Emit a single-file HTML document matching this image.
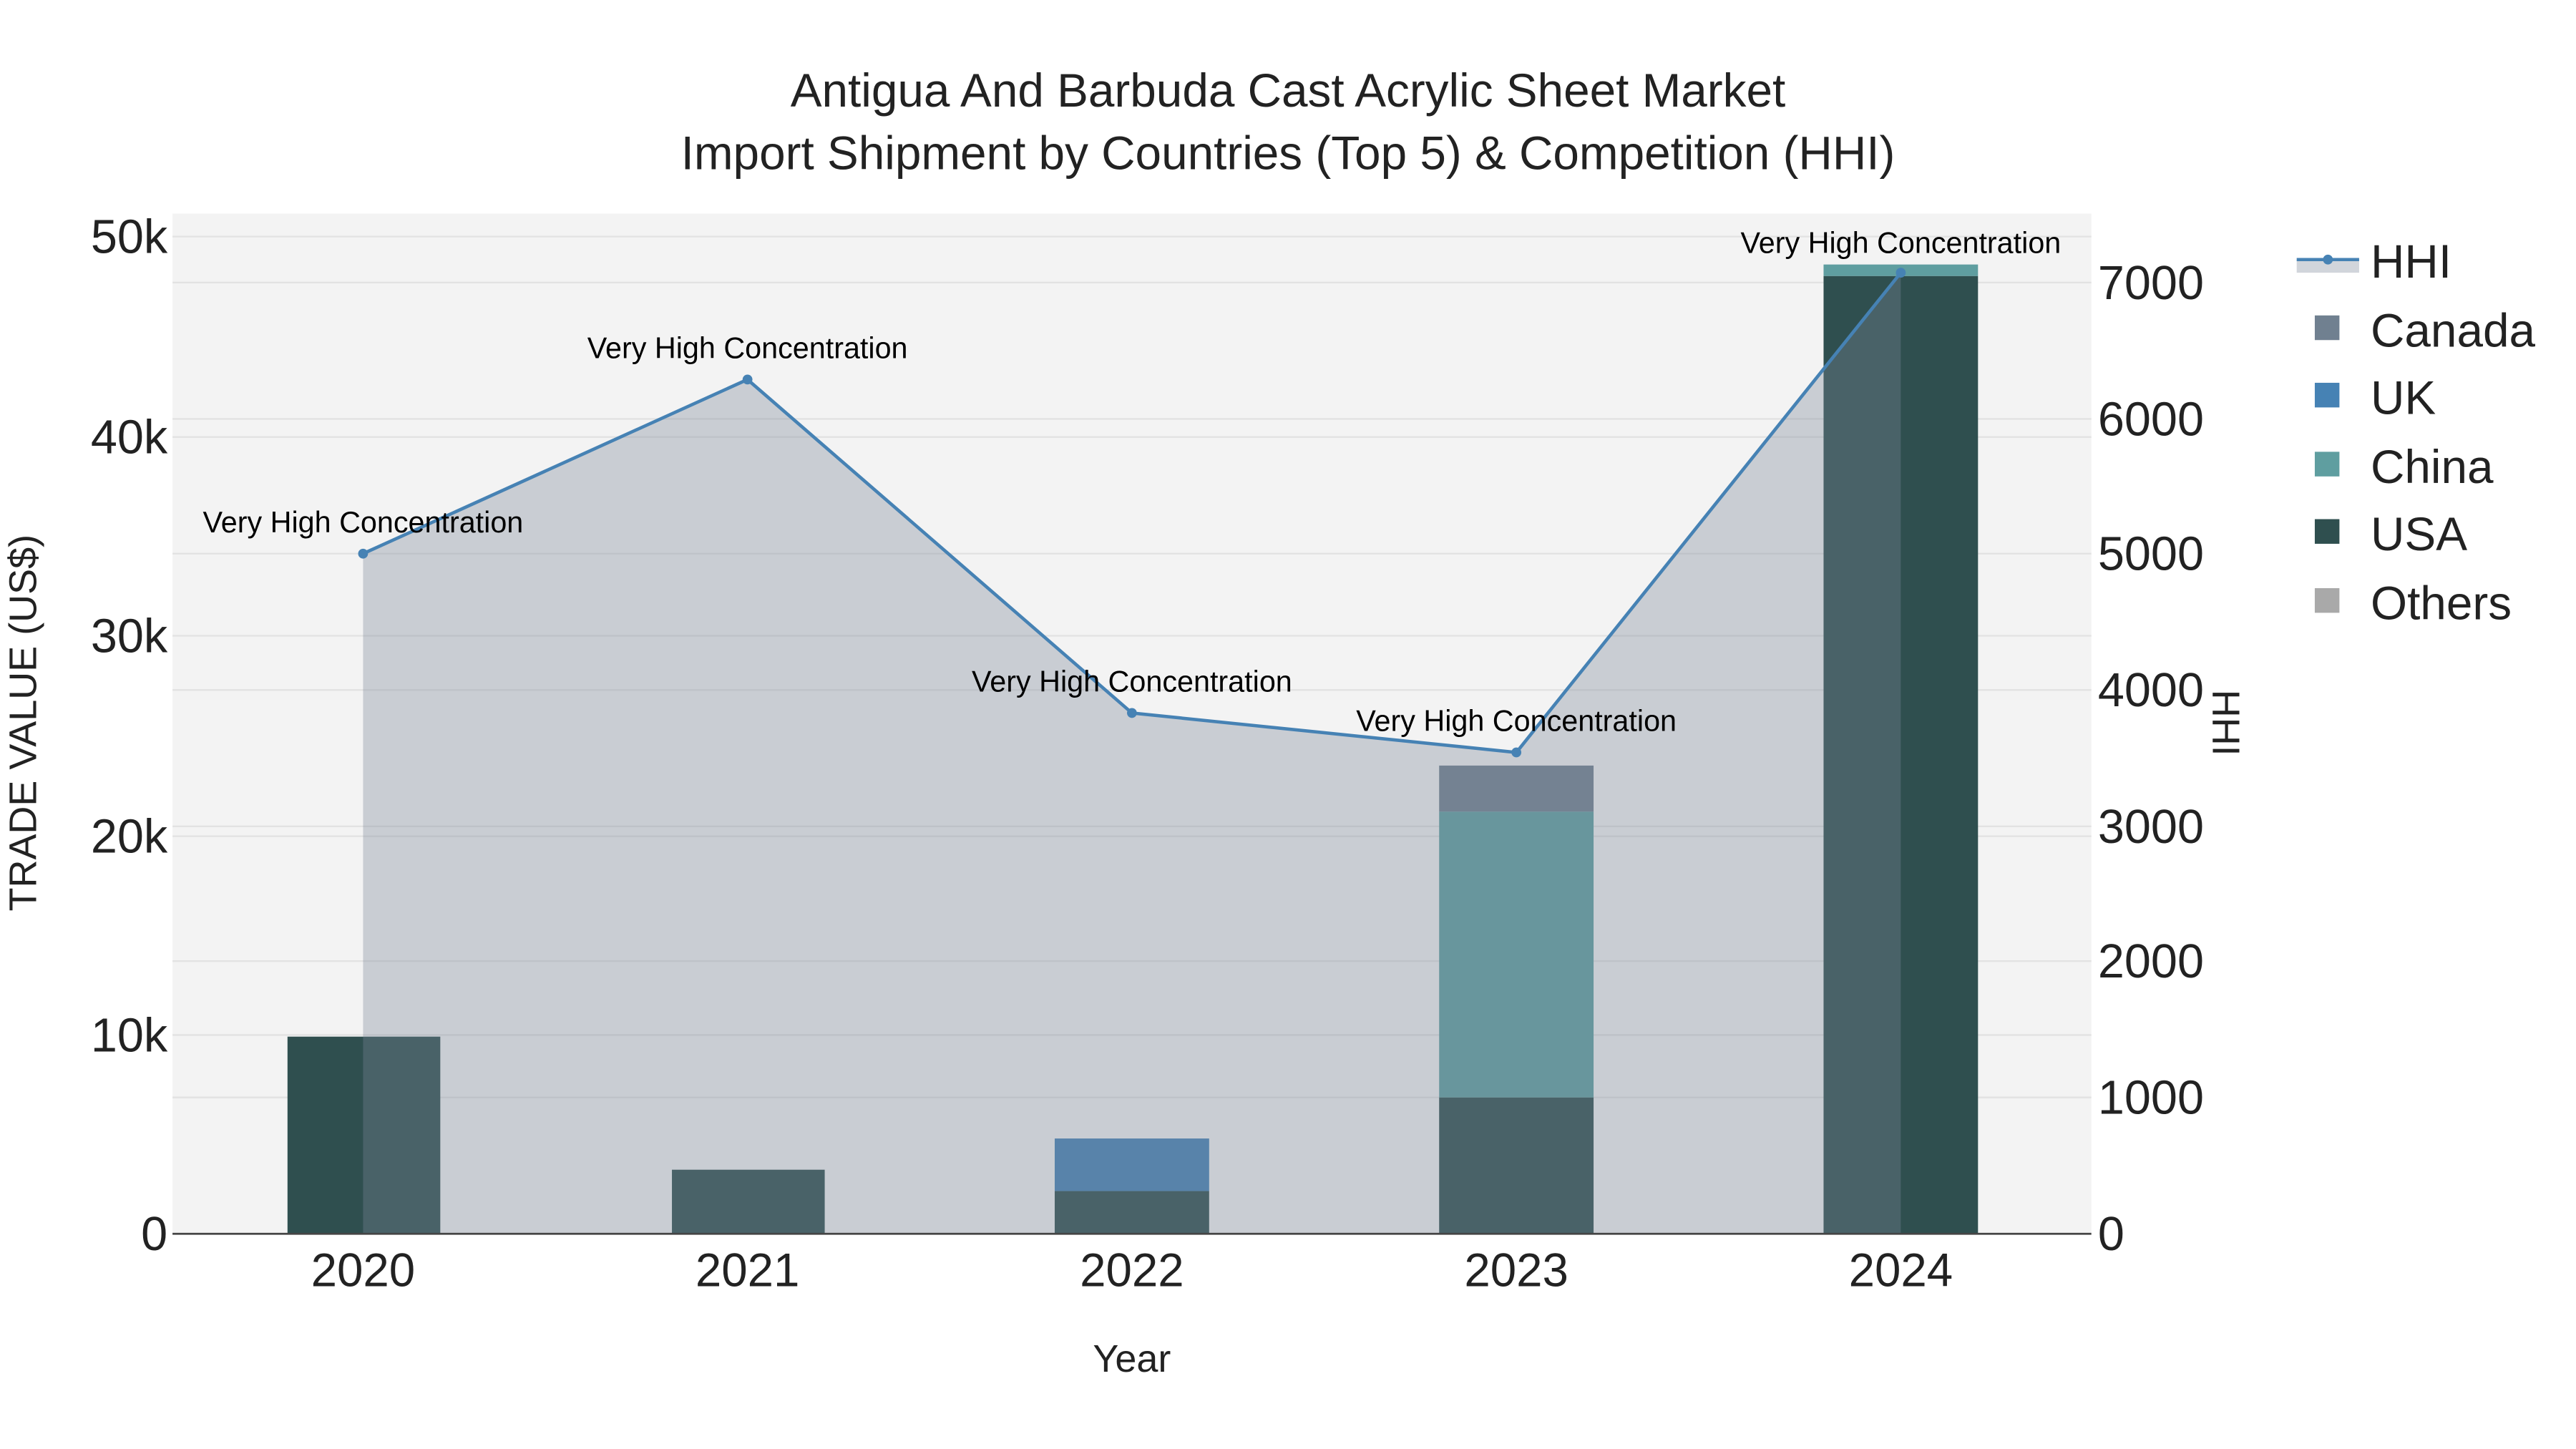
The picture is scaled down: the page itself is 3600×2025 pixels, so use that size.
<!DOCTYPE html>
<html><head><meta charset="utf-8"><style>html,body{margin:0;padding:0;background:#fff}svg{display:block}</style></head>
<body>
<svg width="3600" height="2025" viewBox="0 0 1568 882" xmlns="http://www.w3.org/2000/svg" font-family="Liberation Sans, sans-serif">
<rect x="0" y="0" width="1568" height="882" fill="#fff"/>
<rect x="105" y="130" width="1168" height="621" fill="#f3f3f3"/>
<g stroke="#e2e2e2" stroke-width="1">
<line x1="105" x2="1273" y1="144" y2="144"/><line x1="105" x2="1273" y1="266" y2="266"/><line x1="105" x2="1273" y1="387" y2="387"/><line x1="105" x2="1273" y1="509" y2="509"/><line x1="105" x2="1273" y1="630" y2="630"/>
<line x1="105" x2="1273" y1="172" y2="172"/><line x1="105" x2="1273" y1="255" y2="255"/><line x1="105" x2="1273" y1="337" y2="337"/><line x1="105" x2="1273" y1="420" y2="420"/><line x1="105" x2="1273" y1="503" y2="503"/><line x1="105" x2="1273" y1="585" y2="585"/><line x1="105" x2="1273" y1="668" y2="668"/>
</g>
<rect x="175" y="631" width="93" height="120" fill="#2f4f4f"/>
<rect x="409" y="712" width="93" height="39" fill="#2f4f4f"/>
<rect x="642" y="725" width="94" height="26" fill="#2f4f4f"/>
<rect x="642" y="693" width="94" height="32" fill="#4682b4"/>
<rect x="876" y="668" width="94" height="83" fill="#2f4f4f"/>
<rect x="876" y="494" width="94" height="174" fill="#5f9ea0"/>
<rect x="876" y="466" width="94" height="28" fill="#708090"/>
<rect x="1110" y="168" width="94" height="583" fill="#2f4f4f"/>
<rect x="1110" y="161" width="94" height="7" fill="#5f9ea0"/>
<polygon points="221,751 221,337 455,231 689,434 923,458 1157,166 1157,751" fill="rgb(123,134,153)" fill-opacity="0.35"/>
<polyline points="221,337 455,231 689,434 923,458 1157,166" fill="none" stroke="#4682b4" stroke-width="2"/>
<g fill="#4682b4"><circle cx="221" cy="337" r="3"/><circle cx="455" cy="231" r="3"/><circle cx="689" cy="434" r="3"/><circle cx="923" cy="458" r="3"/><circle cx="1157" cy="166" r="3"/></g>
<line x1="105" x2="1273" y1="751" y2="751" stroke="#444" stroke-width="1.2"/>
<g font-size="18" text-anchor="middle" fill="#000">
<text x="221" y="324">Very High Concentration</text>
<text x="455" y="218">Very High Concentration</text>
<text x="689" y="421">Very High Concentration</text>
<text x="923" y="445">Very High Concentration</text>
<text x="1157" y="154">Very High Concentration</text>
</g>
<g font-size="28.6" text-anchor="middle" fill="#222">
<text x="784" y="65">Antigua And Barbuda Cast Acrylic Sheet Market</text>
<text x="784" y="103">Import Shipment by Countries (Top 5) &amp; Competition (HHI)</text>
</g>
<g font-size="29" text-anchor="end" fill="#222">
<text x="102" y="154">50k</text><text x="102" y="276">40k</text><text x="102" y="397">30k</text><text x="102" y="519">20k</text><text x="102" y="640">10k</text><text x="102" y="761">0</text>
</g>
<g font-size="29" text-anchor="start" fill="#222">
<text x="1277" y="182">7000</text><text x="1277" y="265">6000</text><text x="1277" y="347">5000</text><text x="1277" y="430">4000</text><text x="1277" y="513">3000</text><text x="1277" y="595">2000</text><text x="1277" y="678">1000</text><text x="1277" y="761">0</text>
</g>
<g font-size="28.5" text-anchor="middle" fill="#222">
<text x="221" y="783">2020</text><text x="455" y="783">2021</text><text x="689" y="783">2022</text><text x="923" y="783">2023</text><text x="1157" y="783">2024</text>
</g>
<text x="689" y="835" font-size="23.5" text-anchor="middle" fill="#222">Year</text>
<text transform="translate(22,440) rotate(-90)" font-size="23.5" text-anchor="middle" fill="#222">TRADE VALUE (US$)</text>
<text transform="translate(1347,440) rotate(90)" font-size="23.5" text-anchor="middle" fill="#222">HHI</text>
<rect x="1398" y="158" width="38" height="8" fill="rgb(123,134,153)" fill-opacity="0.35"/>
<line x1="1398" x2="1436" y1="158" y2="158" stroke="#4682b4" stroke-width="2"/>
<circle cx="1417" cy="158" r="3" fill="#4682b4"/>
<rect x="1409" y="192" width="15" height="15" fill="#708090"/>
<rect x="1409" y="233" width="15" height="15" fill="#4682b4"/>
<rect x="1409" y="275" width="15" height="15" fill="#5f9ea0"/>
<rect x="1409" y="316" width="15" height="15" fill="#2f4f4f"/>
<rect x="1409" y="358" width="15" height="15" fill="#a9a9a9"/>
<g font-size="28.6" fill="#222">
<text x="1443" y="169">HHI</text><text x="1443" y="211">Canada</text><text x="1443" y="252">UK</text><text x="1443" y="294">China</text><text x="1443" y="335">USA</text><text x="1443" y="377">Others</text>
</g>
</svg>
</body></html>
